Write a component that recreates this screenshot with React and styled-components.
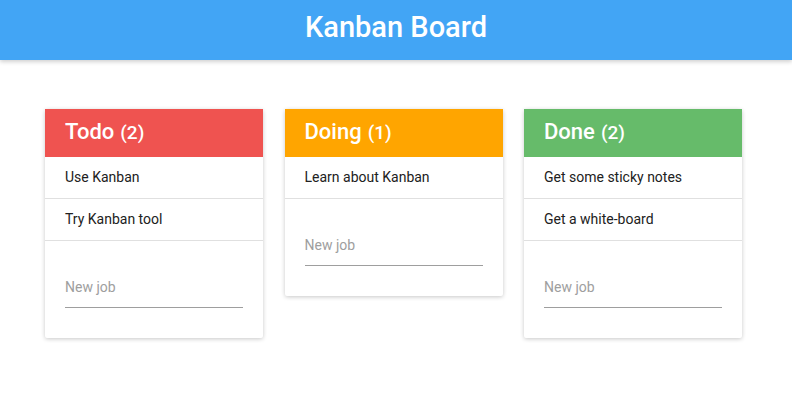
import React from "react"
import styled, { createGlobalStyle } from "styled-components"

const GlobalStyle = createGlobalStyle`
  body {
    margin: 0;
    min-height: 100vh;
    font-family: Roboto, "Noto Sans", sans-serif;
    background: #fff;
    color: #212121;
  }
`

const AppBar = styled.header`
  height: 60px;
  background: #42a5f5;
  box-shadow: 0 2px 4px rgba(0, 0, 0, 0.18);
  display: flex;
  align-items: center;
  justify-content: center;
  h1 {
    margin: 0;
    color: #fff;
    font-size: 29px;
    font-weight: 500;
    padding-bottom: 6px;
  }
`

const Board = styled.main`
  display: flex;
  align-items: flex-start;
  gap: 21.5px;
  padding: 49px 0 40px 45px;
`

const Card = styled.section`
  width: 218px;
  background: #fff;
  box-shadow: 0 1px 4px rgba(0, 0, 0, 0.22);
  border-radius: 2px;
`

const CardHeader = styled.div`
  height: 48px;
  padding: 0 20px 3px;
  box-sizing: border-box;
  display: flex;
  align-items: center;
  background: ${(p) => p.color};
  color: #fff;
  font-size: 22px;
  font-weight: 500;
  span {
    font-size: 19px;
    font-weight: 500;
    margin-left: 6px;
    padding-top: 2px;
  }
`

const Item = styled.div`
  height: 41px;
  padding: 0 20px 2px;
  box-sizing: content-box;
  height: 39px;
  display: flex;
  align-items: center;
  font-size: 14px;
  border-bottom: 1px solid #e0e0e0;
`

const Form = styled.form`
  padding: 30px 20px 30px;
`

const Input = styled.input`
  display: block;
  width: 100%;
  box-sizing: border-box;
  height: 37px;
  border: none;
  border-bottom: 1px solid #9e9e9e;
  outline: none;
  padding: 0 0 5px;
  font-family: inherit;
  font-size: 14px;
  color: #212121;
  background: transparent;
  &::placeholder {
    color: #9e9e9e;
  }
`

const columns = [
  { title: "Todo", color: "#ef5350", items: ["Use Kanban", "Try Kanban tool"] },
  { title: "Doing", color: "#ffa500", items: ["Learn about Kanban"] },
  { title: "Done", color: "#66bb6a", items: ["Get some sticky notes", "Get a white-board"] },
]

export default function App() {
  return (
    <>
      <GlobalStyle />
      <AppBar>
        <h1>Kanban Board</h1>
      </AppBar>
      <Board>
        {columns.map((col) => (
          <Card key={col.title}>
            <CardHeader color={col.color}>
              {col.title}
              <span>({col.items.length})</span>
            </CardHeader>
            {col.items.map((it) => (
              <Item key={it}>{it}</Item>
            ))}
            <Form onSubmit={(e) => e.preventDefault()}>
              <Input placeholder="New job" />
            </Form>
          </Card>
        ))}
      </Board>
    </>
  )
}
